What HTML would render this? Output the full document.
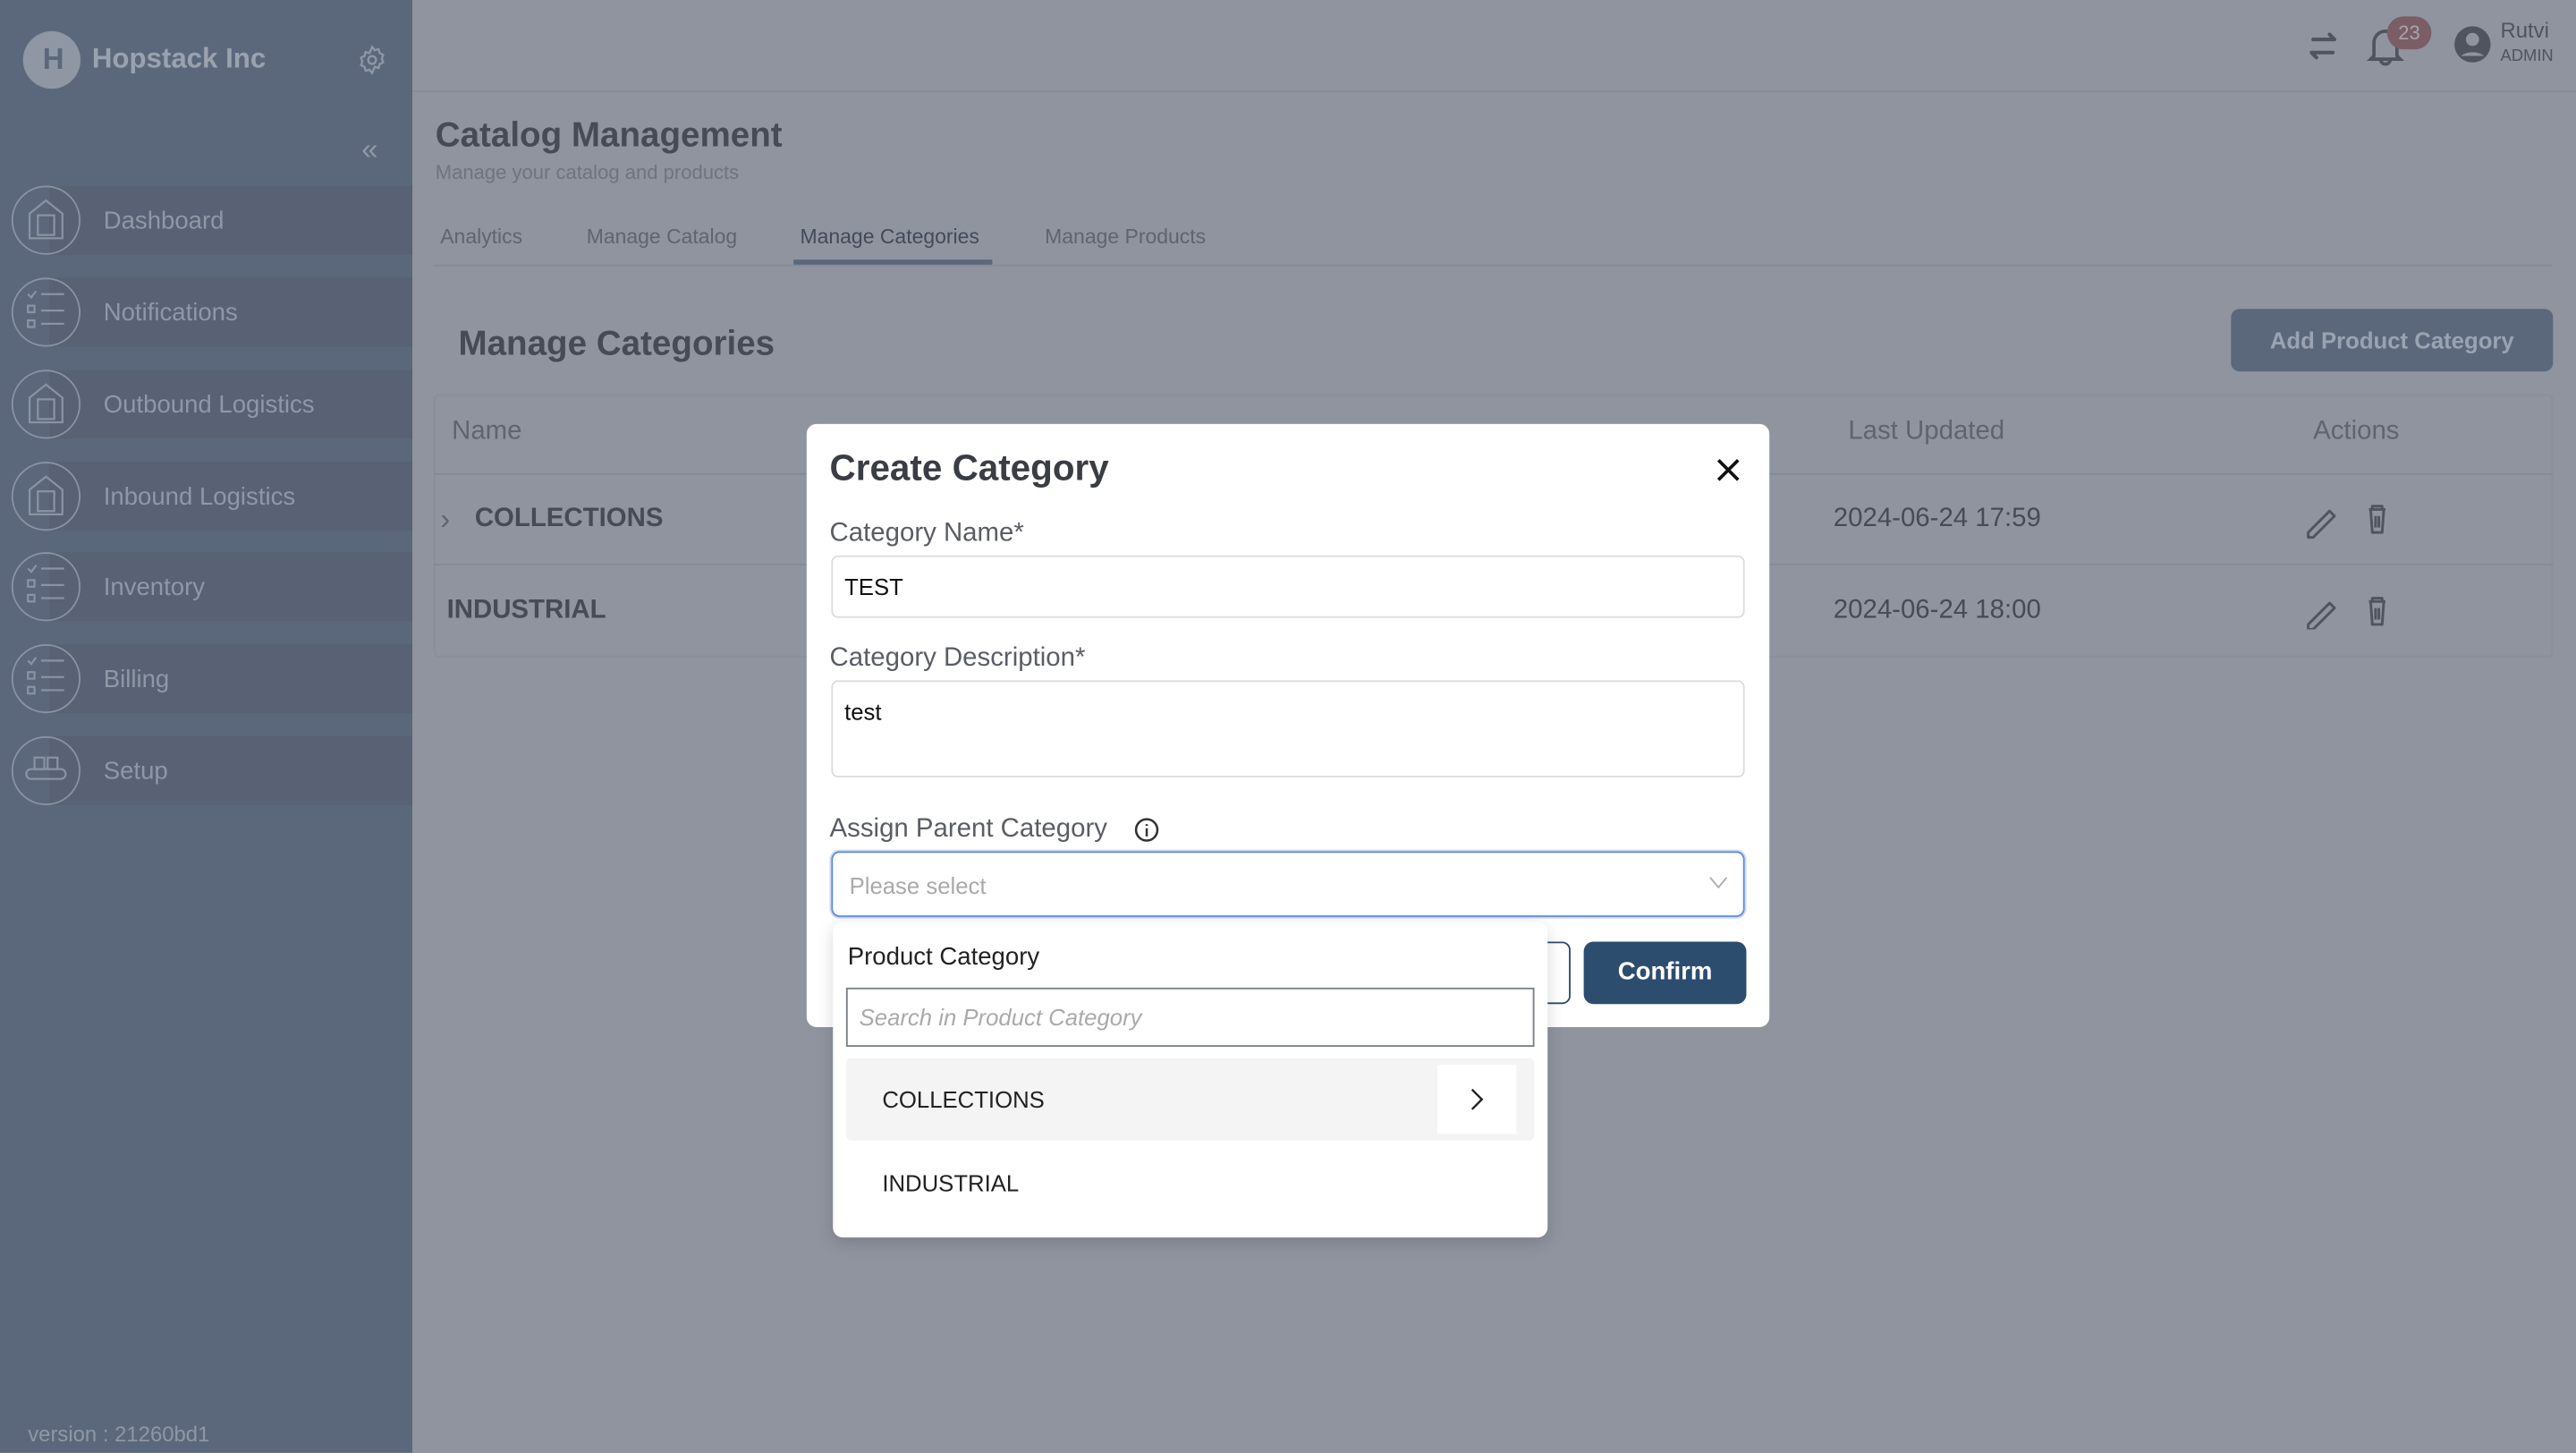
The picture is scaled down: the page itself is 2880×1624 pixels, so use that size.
<!DOCTYPE html>
<html><head><meta charset="utf-8">
<style>
*{box-sizing:border-box;margin:0;padding:0}
html,body{width:2880px;height:1624px;overflow:hidden;background:#8f949f}
#w{position:absolute;left:0;top:0;width:1568px;height:884px;transform:scale(1.83674);transform-origin:0 0;font-family:"Liberation Sans",sans-serif;background:#8f949f}
.a{position:absolute}
.sb{left:0;top:0;width:251px;height:884px;background:#5b687c}
.item{position:absolute;left:30px;width:221px;height:42px;background:#586274}
.circ{position:absolute;left:7px;width:42px;height:42px;border-radius:50%;border:1px solid #8a93a2}
.lbl{position:absolute;left:63px;font-size:15px;color:#8f98a7;line-height:18px}
.t{position:absolute;white-space:nowrap;line-height:1}
</style></head><body><div id="w">
<div class="a sb"></div>
<div class="a" style="left:14px;top:19px;width:35px;height:35px;border-radius:50%;background:#8f97a5"></div>
<div class="t" style="left:26px;top:27px;font-size:18px;font-weight:bold;color:#5b687c">H</div>
<div class="t" style="left:56px;top:27px;font-size:17px;font-weight:bold;color:#9aa2af">Hopstack Inc</div>
<svg class="a" style="left:217px;top:27px" width="19" height="19" viewBox="0 0 24 24" fill="none" stroke="#8f97a5" stroke-width="1.6"><circle cx="12" cy="12" r="3"/><path d="M12 2l2 2.5 3-.8.8 3 2.7 1.3-1 2.9 1 2.9-2.7 1.3-.8 3-3-.8L12 22l-2-2.5-3 .8-.8-3-2.7-1.3 1-2.9-1-2.9 2.7-1.3.8-3 3 .8z"/></svg>
<div class="t" style="left:220px;top:82px;font-size:18px;color:#8f97a5">«</div>
<div class="item" style="top:113px"></div><div class="circ" style="top:113px"></div><div class="lbl" style="top:126px">Dashboard</div>
<div class="item" style="top:169px"></div><div class="circ" style="top:169px"></div><div class="lbl" style="top:182px">Notifications</div>
<div class="item" style="top:225px"></div><div class="circ" style="top:225px"></div><div class="lbl" style="top:238px">Outbound Logistics</div>
<div class="item" style="top:281px"></div><div class="circ" style="top:281px"></div><div class="lbl" style="top:294px">Inbound Logistics</div>
<div class="item" style="top:336px"></div><div class="circ" style="top:336px"></div><div class="lbl" style="top:349px">Inventory</div>
<div class="item" style="top:392px"></div><div class="circ" style="top:392px"></div><div class="lbl" style="top:405px">Billing</div>
<div class="item" style="top:448px"></div><div class="circ" style="top:448px"></div><div class="lbl" style="top:461px">Setup</div>
<svg class="a" style="left:0;top:0" width="60" height="500" fill="none" stroke="#8a93a2" stroke-width="1.2">
<g><path d="M18 130l10-8 10 8v15H18z"/><rect x="23" y="131" width="10" height="12"/></g>
<g><path d="M17 179l2 2 3-4M25 179h14M17 186h4v4h-4zM25 189h14M17 195h4v4h-4zM25 197h14"/></g>
<g><path d="M18 242l10-8 10 8v15H18z"/><rect x="23" y="243" width="10" height="12"/></g>
<g><path d="M18 298l10-8 10 8v15H18z"/><rect x="23" y="299" width="10" height="12"/></g>
<g><path d="M17 346l2 2 3-4M25 346h14M17 353h4v4h-4zM25 356h14M17 362h4v4h-4zM25 364h14"/></g>
<g><path d="M17 402l2 2 3-4M25 402h14M17 409h4v4h-4zM25 412h14M17 418h4v4h-4zM25 420h14"/></g>
<g><rect x="16" y="468" width="24" height="6" rx="3"/><rect x="21" y="461" width="6" height="7"/><rect x="29" y="461" width="6" height="7"/></g>
</svg>
<div class="t" style="left:17px;top:866px;font-size:13px;color:#8f97a5">version : 21260bd1</div>

<div class="a" style="left:251px;top:55px;width:1317px;height:1px;background:#878c97"></div>
<svg class="a" style="left:1402px;top:16px" width="24" height="24" viewBox="0 0 24 24" fill="none" stroke="#4f545e" stroke-width="2.2" stroke-linecap="round" stroke-linejoin="round"><path d="M6 8h13l-3-3M18 16H5l3 3"/></svg>
<svg class="a" style="left:1440px;top:15px" width="24" height="26" viewBox="0 0 24 26" fill="none" stroke="#4f545e" stroke-width="2"><path d="M5 19V11a7 7 0 0 1 14 0v8l2 2H3z"/><path d="M9 21a3 3 0 0 0 6 0"/></svg>
<div class="a" style="left:1453px;top:10px;width:27px;height:20px;border-radius:10px;background:#7b5d66;color:#a9a3ab;font-size:12px;text-align:center;line-height:20px">23</div>
<svg class="a" style="left:1493px;top:15px" width="24" height="24" viewBox="0 0 24 24"><circle cx="12" cy="12" r="11" fill="#4f545e"/><circle cx="12" cy="9" r="4" fill="#8f949f"/><path d="M5 19a9 6 0 0 1 14 0" fill="#8f949f"/></svg>
<div class="t" style="left:1522px;top:12px;font-size:13px;color:#4f545e">Rutvi</div>
<div class="t" style="left:1522px;top:30px;font-size:10px;color:#4f545e">ADMIN</div>

<div class="t" style="left:265px;top:72px;font-size:21px;font-weight:bold;color:#464b55">Catalog Management</div>
<div class="t" style="left:265px;top:99px;font-size:12px;color:#6f7480">Manage your catalog and products</div>
<div class="t" style="left:268px;top:138px;font-size:12.5px;color:#5f6470">Analytics</div>
<div class="t" style="left:357px;top:138px;font-size:12.5px;color:#5f6470">Manage Catalog</div>
<div class="t" style="left:487px;top:138px;font-size:12.5px;color:#434a58">Manage Categories</div>
<div class="t" style="left:636px;top:138px;font-size:12.5px;color:#5f6470">Manage Products</div>
<div class="a" style="left:264px;top:161px;width:1289px;height:1px;background:#858a95"></div>
<div class="a" style="left:483px;top:158px;width:121px;height:3px;background:#5b687c"></div>

<div class="t" style="left:279px;top:199px;font-size:21px;font-weight:bold;color:#464b55">Manage Categories</div>
<div class="a" style="left:1358px;top:188px;width:196px;height:38px;border-radius:5px;background:#5b687c;color:#9aa3b0;font-size:14px;font-weight:bold;text-align:center;line-height:38px">Add Product Category</div>

<div class="a" style="left:264px;top:240px;width:1290px;height:160px;border:1px solid #8a8f9a;border-radius:3px"></div>
<div class="a" style="left:264px;top:288px;width:1290px;height:1px;background:#858a95"></div>
<div class="a" style="left:264px;top:343px;width:1290px;height:1px;background:#858a95"></div>
<div class="t" style="left:275px;top:255px;font-size:16px;color:#5f6470">Name</div>
<div class="t" style="left:1125px;top:255px;font-size:16px;color:#5f6470">Last Updated</div>
<div class="t" style="left:1408px;top:255px;font-size:16px;color:#5f6470">Actions</div>
<div class="t" style="left:268px;top:307px;font-size:18px;color:#5f6470">›</div>
<div class="t" style="left:289px;top:308px;font-size:16px;font-weight:bold;color:#464b55">COLLECTIONS</div>
<div class="t" style="left:272px;top:364px;font-size:16px;font-weight:bold;color:#464b55">INDUSTRIAL</div>
<div class="t" style="left:1116px;top:308px;font-size:16px;color:#464b55">2024-06-24 17:59</div>
<div class="t" style="left:1116px;top:364px;font-size:16px;color:#464b55">2024-06-24 18:00</div>
<svg class="a" style="left:1400px;top:303px" width="64" height="80" fill="none" stroke="#4f545e" stroke-width="1.6" stroke-linejoin="round">
<path d="M5 21l13-13 3 3L8 24H5z"/><path d="M42 7h10M44 7v-2h6v2M43 7l1 14h6l1-14M46 11v7M48 11v7"/>
<path d="M5 77l13-13 3 3L8 80H5z"/><path d="M42 63h10M44 63v-2h6v2M43 63l1 14h6l1-14M46 67v7M48 67v7"/>
</svg>

<div class="a" style="left:491px;top:258px;width:586px;height:367px;background:#fff;border-radius:6px"></div>
<div class="t" style="left:505px;top:274px;font-size:22px;font-weight:bold;color:#3a3d44">Create Category</div>
<svg class="a" style="left:1043px;top:277px" width="18" height="18" stroke="#111" stroke-width="2"><path d="M3 3l12 12M15 3L3 15"/></svg>
<div class="t" style="left:505px;top:317px;font-size:16px;color:#5a5d64">Category Name*</div>
<div class="a" style="left:506px;top:338px;width:556px;height:38px;border:1.5px solid #dcdcdc;border-radius:4px"></div>
<div class="t" style="left:514px;top:350px;font-size:14px;color:#111">TEST</div>
<div class="t" style="left:505px;top:393px;font-size:16px;color:#5a5d64">Category Description*</div>
<div class="a" style="left:506px;top:414px;width:556px;height:59px;border:1.5px solid #dcdcdc;border-radius:4px"></div>
<div class="t" style="left:514px;top:426px;font-size:14px;color:#111">test</div>
<div class="t" style="left:505px;top:497px;font-size:16px;color:#5a5d64">Assign Parent Category</div>
<svg class="a" style="left:690px;top:497px" width="16" height="16" fill="none" stroke="#333" stroke-width="1.4"><circle cx="8" cy="8" r="6.5"/><path d="M8 7v5M8 4.5v1"/></svg>
<div class="a" style="left:506px;top:518px;width:556px;height:40px;border:1.5px solid #5b8be0;border-radius:5px;box-shadow:0 0 0 1px #cfd9ee"></div>
<div class="t" style="left:517px;top:532px;font-size:14px;color:#aaa">Please select</div>
<svg class="a" style="left:1040px;top:533px" width="12" height="8" fill="none" stroke="#aaa" stroke-width="1"><path d="M1 1l5 6 5-6"/></svg>
<div class="a" style="left:900px;top:573px;width:56px;height:38px;border:1.5px solid #2d4a6b;border-radius:5px"></div>
<div class="a" style="left:964px;top:573px;width:99px;height:38px;border-radius:6px;background:#2d4d6f;color:#fff;font-size:15px;font-weight:bold;text-align:center;line-height:38px">Confirm</div>

<div class="a" style="left:507px;top:561px;width:435px;height:192px;background:#fff;border-radius:6px;box-shadow:0 3px 10px rgba(0,0,0,.15)"></div>
<div class="t" style="left:516px;top:575px;font-size:15px;color:#222">Product Category</div>
<div class="a" style="left:515px;top:601px;width:419px;height:36px;border:1px solid #7a7f88"></div>
<div class="t" style="left:523px;top:612px;font-size:14px;font-style:italic;color:#aaa">Search in Product Category</div>
<div class="a" style="left:515px;top:644px;width:419px;height:50px;background:#f4f4f4;border-radius:3px"></div>
<div class="a" style="left:875px;top:648px;width:48px;height:42px;background:#fff"></div>
<svg class="a" style="left:894px;top:662px" width="10" height="14" fill="none" stroke="#222" stroke-width="1.3"><path d="M2 1l6 6-6 6"/></svg>
<div class="t" style="left:537px;top:662px;font-size:14px;color:#222">COLLECTIONS</div>
<div class="t" style="left:537px;top:713px;font-size:14px;color:#222">INDUSTRIAL</div>
</div></body></html>
